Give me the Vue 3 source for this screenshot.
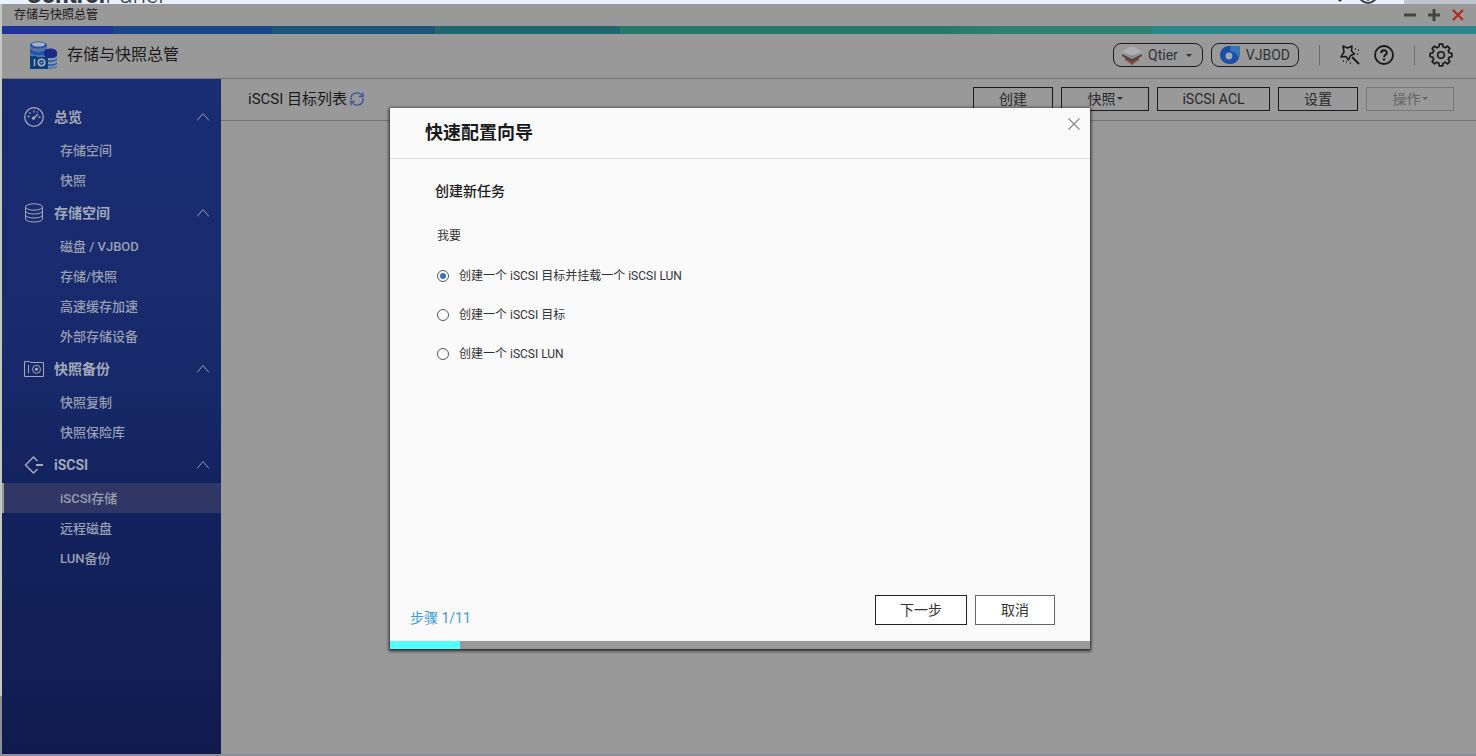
<template>
  <div class="desktop">
    <div class="backdrop" aria-hidden="true">
      <div class="backdrop-title"><b>Control</b>Panel</div>
      <div class="backdrop-tools">
        <svg width="18" height="18" viewBox="0 0 18 18">
          <path d="M7 7l8 8" stroke="#333a45" stroke-width="3" />
          <circle cx="6" cy="6" r="4" fill="none" stroke="#333a45" stroke-width="2" />
        </svg>
        <svg width="20" height="18" viewBox="0 0 20 18">
          <circle cx="10" cy="8" r="9" fill="none" stroke="#333a45" stroke-width="2" />
          <circle cx="10" cy="14" r="1" fill="#333a45" />
        </svg>
      </div>
      <div class="backdrop-edge"></div>
    </div>

    <div class="window">
      <div class="titlebar">
        <span>存储与快照总管</span>
        <div class="window-controls">
          <button type="button" aria-label="最小化">
            <svg width="12" height="12" viewBox="0 0 12 12"><path d="M0 6h12" stroke="#454545" stroke-width="3" /></svg>
          </button>
          <button type="button" aria-label="最大化">
            <svg width="12" height="12" viewBox="0 0 12 12"><path d="M0 6h12M6 0v12" stroke="#454545" stroke-width="3" /></svg>
          </button>
          <button type="button" aria-label="关闭窗口">
            <svg width="12" height="12" viewBox="0 0 12 12"><path d="M1 1l10 10M11 1L1 11" stroke="#b5221f" stroke-width="2" /></svg>
          </button>
        </div>
      </div>
      <div class="rainbow"></div>

      <header class="app-header">
        <svg class="logo" width="28" height="28" viewBox="0 0 28 28">
          <path d="M1 4v15h17V4z" fill="#5474a8" />
          <path d="M1 8c4 4 13 4 17 0v4c-4 3-13 3-17 0z" fill="#1f56ad" />
          <ellipse cx="9.5" cy="4" rx="8.5" ry="3.6" fill="#2055ad" />
          <ellipse cx="9.5" cy="3.4" rx="6.5" ry="2.2" fill="#a9b4c0" />
          <path d="M15 11v15c3 2 10 2 13 0V11z" fill="#8e9aab" />
          <ellipse cx="21.5" cy="11" rx="6.5" ry="3.6" fill="#172b88" />
          <path d="M15 11v4c3 3 10 3 13 0v-4z" fill="#172b88" />
          <path d="M15 17c3 3 10 3 13 0v2c-3 3-10 3-13 0zM15 21c3 3 10 3 13 0v2c-3 3-10 3-13 0zM15 25c3 2 10 2 13 0v1c-3 2-10 2-13 0z" fill="#3263b0" />
          <path d="M1 15h6l1 1h11v12H1z" fill="#0f3e7d" />
          <path d="M5.5 18v7" stroke="#a8b2be" stroke-width="1.4" />
          <circle cx="12.5" cy="21.5" r="3.2" fill="none" stroke="#a8b2be" stroke-width="1.6" />
          <circle cx="12.5" cy="21.5" r="1" fill="#a8b2be" />
        </svg>
        <h1>存储与快照总管</h1>
        <div class="header-tools">
          <button type="button" class="pill">
            <svg width="20" height="20" viewBox="0 0 20 20">
              <path d="M3 14l7 3 7-3-7 6z" fill="#96443c" />
              <path d="M3 12l7 4 7-4v3l-7 4-7-4z" fill="#96443c" />
              <path d="M0 9l10 5 10-5v2l-10 6-10-6z" fill="#4a4648" />
              <path d="M0 7l7-5q3-1 6 0l7 5-7 4q-3 2-6 0z" fill="#aeaeb0" />
              <path d="M0 7l7 3q3 1 6 0l7-3-10 6z" fill="#838385" />
            </svg>
            Qtier
            <i class="caret"></i>
          </button>
          <button type="button" class="pill">
            <svg width="20" height="20" viewBox="0 0 20 20">
              <path d="M9 1h11v4c0 9-3 14-10 14-5 0-10-3-10-9S5 1 9 1z" fill="#1d4fa8" />
              <path d="M11 1h9v4c0 4-1 6-2 8-1-5-3-6-8-7z" fill="#3277bd" />
              <circle cx="9" cy="11" r="3.4" fill="#a3a7ad" />
            </svg>
            VJBOD
          </button>
          <span class="divider"></span>
          <button type="button" class="icon-btn" aria-label="快速配置向导">
            <svg width="20" height="20" viewBox="0 0 20 20" fill="none" stroke="#1a1a1a">
              <path d="M3 1l4.500 2L12 1l-.5 5 3 3-4 1.500L8.500 15 6 11.500l-5 .5L4 7z" stroke-width="1.600" stroke-linejoin="round" />
              <path d="M12 12l7 7" stroke-width="2" />
              <path d="M15 4h1M18 5h1M17 9h1M3 16h1M6 17h1M10 18h1" stroke-width="1.300" />
            </svg>
          </button>
          <button type="button" class="icon-btn help" aria-label="帮助">
            <svg width="20" height="20" viewBox="0 0 20 20" fill="none" stroke="#1a1a1a">
              <circle cx="10" cy="10" r="9" stroke-width="1.800" />
              <path d="M7.300 8c0-3.600 5.600-3.500 5.500-.2 0 1.900-2.700 2.200-2.700 4.400" stroke-width="2" />
              <path d="M10 13.500v2" stroke-width="2.200" />
            </svg>
          </button>
          <span class="divider"></span>
          <button type="button" class="icon-btn gear" aria-label="设置选项">
            <svg width="24" height="24" viewBox="0 0 24 24" fill="none" stroke="#1a1a1a" stroke-linejoin="round">
              <path :d="gearPath" stroke-width="1.700" />
              <circle cx="12" cy="12" r="3.300" stroke-width="1.600" />
            </svg>
          </button>
        </div>
      </header>

      <div class="main">
        <nav class="sidebar">
          <section v-for="group in groups" :key="group.title">
            <button type="button" class="group-header">
              <svg width="20" height="20" viewBox="0 0 20 20" fill="none" stroke="#a2a8b8">
                <template v-if="group.icon === 'gauge'">
                  <circle cx="10" cy="10" r="9.300" stroke-width="1.300" />
                  <path d="M9.500 11.500L14 7" stroke-width="1.500" />
                  <circle cx="9.500" cy="11.200" r="1.200" fill="#a2a8b8" />
                  <path d="M10 3.500v2M5.500 5.300l1 1.300M3.500 9.500h2M14.500 10h2M13.500 4.500l-.5 1" stroke-width="1.300" />
                </template>
                <template v-else-if="group.icon === 'disks'">
                  <ellipse cx="10" cy="4" rx="8.500" ry="3.200" />
                  <path d="M1.500 4v12c0 4 17 4 17 0V4M1.500 8c0 4 17 4 17 0M1.500 12c0 4 17 4 17 0" />
                </template>
                <template v-else-if="group.icon === 'snapshot'">
                  <path d="M.5 17.500v-15h5l1.500 1h12.500v14z" />
                  <path d="M4.500 6v8" />
                  <circle cx="12.500" cy="10.300" r="4" />
                  <circle cx="12.500" cy="10.300" r="1.200" fill="#a2a8b8" />
                </template>
                <template v-else>
                  <path d="M13.500 6L9.500 2 1.500 10l8 8 4-4" stroke-width="1.500" />
                  <path d="M12 10h7" stroke-width="2" />
                </template>
              </svg>
              <span>{{ group.title }}</span>
              <svg class="chevron" width="12" height="8" viewBox="0 0 12 8"><path d="M0 7.500l6-7 6 7" fill="none" stroke="#959cb0" /></svg>
            </button>
            <a
              v-for="item in group.items"
              :key="item"
              href="#"
              class="nav-item"
              :class="{ active: item === 'iSCSI存储' }"
            >{{ item }}</a>
          </section>
        </nav>

        <main class="content">
          <div class="toolbar">
            <h2>iSCSI 目标列表</h2>
            <button type="button" class="refresh" aria-label="刷新">
              <svg width="14" height="14" viewBox="0 0 14 14" fill="none" stroke="#3552a0" stroke-width="1.300">
                <path d="M1 8V6c0-5 8-7 11-2.500M13 .5v4H9M13 6v2c0 5-8 7-11 2.500M1 13.500v-4h4" />
              </svg>
            </button>
            <div class="actions">
              <button type="button" class="action">创建</button>
              <button type="button" class="action menu">快照<i class="caret"></i></button>
              <button type="button" class="action wide">iSCSI ACL</button>
              <button type="button" class="action">设置</button>
              <button type="button" class="action menu" disabled>操作<i class="caret"></i></button>
            </div>
          </div>
        </main>
      </div>
    </div>

    <div class="overlay">
      <form class="dialog" role="dialog" aria-labelledby="wizard-title" @submit.prevent>
        <div class="dialog-header">
          <h2 id="wizard-title">快速配置向导</h2>
          <button type="button" class="close" aria-label="关闭">
            <svg width="12" height="12" viewBox="0 0 12 12"><path d="M.5 .5l11 11M11.500 .5l-11 11" stroke="#8a8a8a" stroke-width="1.200" /></svg>
          </button>
        </div>
        <div class="dialog-body">
          <h3>创建新任务</h3>
          <fieldset>
            <legend>我要</legend>
            <label v-for="option in options" :key="option.value">
              <input v-model="selected" type="radio" name="task" :value="option.value" />
              <span>{{ option.label }}</span>
            </label>
          </fieldset>
        </div>
        <div class="dialog-footer">
          <span class="step">步骤 1/11</span>
          <button type="submit" class="next">下一步</button>
          <button type="button" class="cancel">取消</button>
        </div>
        <div class="progress"><div class="progress-fill" :style="{ width: progress + '%' }"></div></div>
      </form>
    </div>
  </div>
</template>

<script setup>
import { ref } from 'vue'

const selected = ref('both')
const progress = ref(10)

const groups = [
  { title: '总览', icon: 'gauge', items: ['存储空间', '快照'] },
  { title: '存储空间', icon: 'disks', items: ['磁盘 / VJBOD', '存储/快照', '高速缓存加速', '外部存储设备'] },
  { title: '快照备份', icon: 'snapshot', items: ['快照复制', '快照保险库'] },
  { title: 'iSCSI', icon: 'iscsi', items: ['iSCSI存储', '远程磁盘', 'LUN备份'] }
]

const options = [
  { value: 'both', label: '创建一个 iSCSI 目标并挂载一个 iSCSI LUN' },
  { value: 'target', label: '创建一个 iSCSI 目标' },
  { value: 'lun', label: '创建一个 iSCSI LUN' }
]

// eight teeth, each with an outer and an inner edge
const gearPoint = (degrees, radius) => {
  const a = (degrees * Math.PI) / 180
  return `${(12 + radius * Math.sin(a)).toFixed(2)} ${(12 - radius * Math.cos(a)).toFixed(2)}`
}
const gearPath = 'M' + Array.from({ length: 8 }, (_, i) => i * 45)
  .flatMap((d) => [gearPoint(d - 14, 8.5), gearPoint(d - 9, 11), gearPoint(d + 9, 11), gearPoint(d + 14, 8.5)])
  .join('L') + 'Z'
</script>

<style>
body {
  margin: 0;
}
</style>

<style scoped>
.desktop {
  position: relative;
  display: flex;
  flex-direction: column;
  box-sizing: border-box;
  min-height: 100vh;
  padding: 0 0 2px 2px;
  background: linear-gradient(#c2c9c2 92%, #8a9097 92%);
  font-family: Roboto, "Noto Sans CJK SC", sans-serif;
  line-height: 20px;
  color: #1a1a1a;
}

h1,
h2,
h3 {
  margin: 0;
}

button {
  font-family: inherit;
  line-height: inherit;
  color: inherit;
  padding: 0;
  border: none;
  background: none;
  cursor: pointer;
}

svg {
  display: block;
  flex: none;
}

.backdrop {
  display: flex;
  align-items: flex-end;
  height: 4px;
  margin-left: -2px;
  overflow: hidden;
  background: #eaf0fc;
}

.backdrop-title {
  padding-left: 26px;
  font-size: 24px;
  line-height: 18px;
  font-weight: 300;
  color: #333a45;
}

.backdrop-title b {
  font-weight: 700;
}

.backdrop-tools {
  display: flex;
  gap: 14px;
  margin-left: auto;
}

.backdrop-edge {
  width: 72px;
  height: 4px;
  margin-left: 26px;
  background: #bfc5cd;
}

.window {
  display: flex;
  flex: 1;
  flex-direction: column;
  background: #999;
}

.titlebar {
  display: flex;
  align-items: center;
  justify-content: space-between;
  height: 22px;
  padding: 0 12px;
  font-size: 12px;
}

.window-controls {
  display: flex;
  gap: 12px;
}

.rainbow {
  height: 8px;
  background: linear-gradient(
    90deg,
    #21349a 7.5%, #1a4588 7.5% 18.3%, #1f5579 18.3% 29.4%, #226670 29.4% 41.9%,
    #28786a 41.9% 63.5%, #2f8173 68% 78.1%, #2b868c 78.1%
  );
}

.app-header {
  display: flex;
  align-items: center;
  box-sizing: border-box;
  height: 45px;
  padding: 0 23px 2px 27px;
  border-bottom: 1px solid #747474;
}

.app-header h1 {
  margin-left: 10px;
  font-size: 16px;
  font-weight: 400;
}

.header-tools {
  display: flex;
  align-items: center;
  margin-left: auto;
}

.pill {
  display: flex;
  align-items: center;
  gap: 6px;
  box-sizing: border-box;
  height: 24px;
  margin-right: 8px;
  padding: 0 8px;
  border: 1px solid #1a1a1a;
  border-radius: 8px;
  font-size: 14px;
  color: #333;
}

.caret {
  width: 0;
  height: 0;
  border: 3px solid transparent;
  border-top-color: currentColor;
  border-bottom: none;
}

.pill .caret {
  margin: 0 2px;
}

.divider {
  width: 1px;
  height: 20px;
  margin: 0 20px 0 12px;
  background: #6c6c6c;
}

.help {
  margin: 0 8px 0 14px;
}

.gear {
  margin-left: -6px;
}

.main {
  display: flex;
  flex: 1;
}

.sidebar {
  flex: none;
  box-sizing: border-box;
  width: 219px;
  padding-top: 20px;
  background: linear-gradient(#1a2c72, #192a6c 40%, #13235f 60%, #121f55 85%, #111a4f);
}

.group-header {
  display: flex;
  align-items: center;
  gap: 10px;
  width: 100%;
  height: 36px;
  padding: 0 12px 0 22px;
  font-size: 14px;
  font-weight: 700;
  color: #a2a8b8;
}

.chevron {
  margin-left: auto;
}

.nav-item {
  display: block;
  padding: 2px 0 0 58px;
  font-size: 13px;
  line-height: 28px;
  font-weight: 500;
  color: #989fb2;
  text-decoration: none;
}

.nav-item.active {
  padding-left: 56px;
  border-left: 2px solid #999;
  background: #313764;
}

.content {
  flex: 1;
}

.toolbar {
  display: flex;
  align-items: center;
  box-sizing: border-box;
  height: 42px;
  padding: 0 22px 2px 27px;
  border-bottom: 1px solid #747474;
}

.toolbar h2 {
  font-size: 15px;
  font-weight: 400;
}

.refresh {
  margin-left: 3px;
}

.actions {
  display: flex;
  gap: 8px;
  margin-left: auto;
}

.action {
  display: flex;
  align-items: center;
  justify-content: center;
  box-sizing: border-box;
  width: 80px;
  height: 24px;
  border: 1px solid #1a1a1a;
  font-size: 14px;
  color: #2a2a2a;
}

.action.menu {
  gap: 1px;
  width: 88px;
}

.action.wide {
  width: 113px;
}

.action:disabled {
  border-color: #777;
  color: #666;
  cursor: default;
}

.overlay {
  position: absolute;
  inset: 0;
  display: flex;
  align-items: center;
  justify-content: center;
  padding-left: 4px;
}

.dialog {
  display: flex;
  flex-direction: column;
  width: 700px;
  max-width: 90%;
  min-height: 541px;
  background: #fafafa;
  box-shadow: 0 1px 3px 1px #222;
}

.dialog-header {
  display: flex;
  align-items: center;
  justify-content: space-between;
  height: 50px;
  padding: 0 10px 0 35px;
  border-bottom: 1px solid #ddd;
}

.dialog-header h2 {
  font-size: 18px;
  font-weight: 700;
}

.close {
  align-self: flex-start;
  margin-top: 10px;
}

.dialog-body {
  flex: 1;
  padding: 22px 45px;
}

.dialog-body h3 {
  font-size: 14px;
  font-weight: 500;
}

fieldset {
  margin: 0;
  padding: 25px 2px 0;
  border: none;
  font-size: 12px;
  color: #333;
}

legend {
  float: left;
  width: 100%;
  margin-bottom: 20px;
  padding: 0;
}

fieldset label {
  display: flex;
  clear: both;
  align-items: center;
  gap: 10px;
  height: 20px;
  margin-bottom: 19px;
}

input[type="radio"] {
  display: grid;
  place-content: center;
  appearance: none;
  box-sizing: border-box;
  width: 12px;
  height: 12px;
  margin: 0;
  border: 1px solid #555;
  border-radius: 50%;
  background: #fff;
}

input[type="radio"]:checked::before {
  content: "";
  width: 6px;
  height: 6px;
  border-radius: 50%;
  background: #3c70c4;
}

.dialog-footer {
  display: flex;
  align-items: center;
  gap: 8px;
  padding: 0 35px 16px 20px;
}

.step {
  align-self: flex-end;
  margin-right: auto;
  font-size: 14px;
  line-height: 14px;
  color: #3b9cdb;
}

.dialog-footer button {
  box-sizing: border-box;
  width: 80px;
  height: 30px;
  border: 1px solid #666;
  background: #fff;
  font-size: 14px;
  color: #333;
}

.dialog-footer .next {
  width: 92px;
  border-color: #222;
}

.progress {
  height: 8px;
  background: #999;
}

.progress-fill {
  height: 100%;
  background: #52ffff;
}
</style>
